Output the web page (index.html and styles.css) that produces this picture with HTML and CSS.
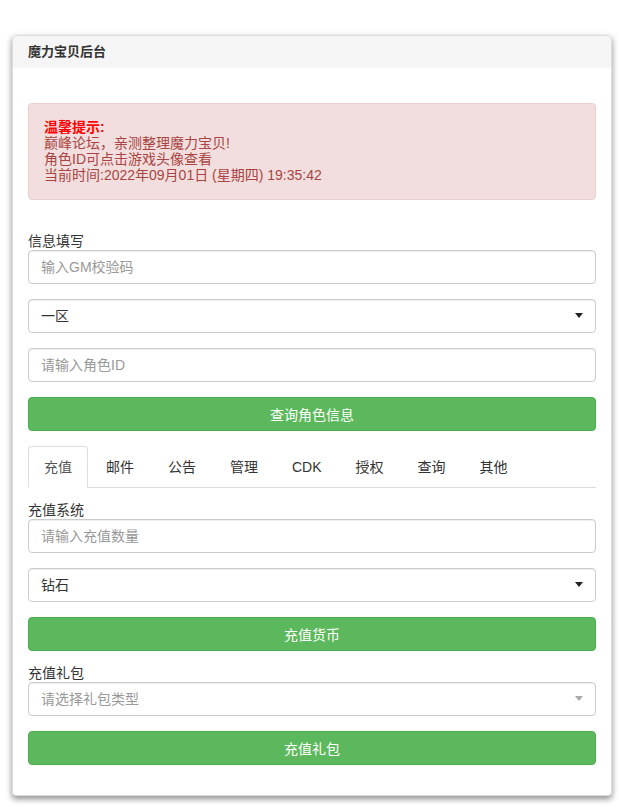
FILE: index.html
```html
<!DOCTYPE html>
<html lang="zh-CN">
<head>
    <meta charset="UTF-8">
    <meta name="viewport" content="width=device-width, initial-scale=1.0">
    <title>魔力宝贝后台</title>
    <link rel="stylesheet" href="styles.css">
</head>
<body>
    <div class="panel">
        <div class="panel-heading">魔力宝贝后台</div>
        <div class="panel-body">
            <div class="alert">
                <strong>温馨提示:</strong><br>
                巅峰论坛，亲测整理魔力宝贝!<br>
                角色ID可点击游戏头像查看<br>
                当前时间:2022年09月01日 (星期四) 19:35:42
            </div>

            <label class="field-label">信息填写</label>
            <input class="control" type="text" placeholder="输入GM校验码">
            <div class="select-wrap">
                <select class="control">
                    <option>一区</option>
                    <option>二区</option>
                </select>
            </div>
            <input class="control" type="text" placeholder="请输入角色ID">
            <button class="btn">查询角色信息</button>

            <ul class="tabs">
                <li class="active"><a href="#pay">充值</a></li>
                <li><a href="#mail">邮件</a></li>
                <li><a href="#notice">公告</a></li>
                <li><a href="#admin">管理</a></li>
                <li><a href="#cdk">CDK</a></li>
                <li><a href="#auth">授权</a></li>
                <li><a href="#query">查询</a></li>
                <li><a href="#other">其他</a></li>
            </ul>

            <div class="tab-pane">
                <label class="field-label">充值系统</label>
                <input class="control" type="text" placeholder="请输入充值数量">
                <div class="select-wrap">
                    <select class="control">
                        <option>钻石</option>
                        <option>金币</option>
                    </select>
                </div>
                <button class="btn">充值货币</button>

                <label class="field-label">充值礼包</label>
                <div class="select-wrap muted">
                    <select class="control placeholder">
                        <option>请选择礼包类型</option>
                    </select>
                </div>
                <button class="btn">充值礼包</button>
            </div>
        </div>
    </div>
</body>
</html>
```

FILE: styles.css
```css
/* bootstrap-ish panel page */
body {
    margin: 0;
    padding: 35px 8px 40px 12px;
    background: #fff;
    color: #333;
    font-family: "Liberation Sans", Arial, "Noto Sans CJK SC", sans-serif;
    font-size: 14px;
}
.panel {
    border: 1px solid #ddd;
    border-radius: 4px;
    background: #fff;
    box-shadow: 0 3px 6px rgba(0, 0, 0, 0.45);
}
.panel-heading {
    height: 32px;
    line-height: 32px;
    padding: 0 15px;
    background-color: #f5f5f5;
    font-size: 13px;
    font-weight: bold;
    border-radius: 3px 3px 0 0;
}
.panel-body {
    padding: 35px 15px 30px;
}
.alert {
    padding: 15px 15px 16px;
    line-height: 16px;
    background-color: #f2dede;
    border: 1px solid #ebccd1;
    border-radius: 4px;
    color: #a94442;
    margin-bottom: 33px;
}
.alert strong {
    color: #f00;
}
.field-label {
    display: block;
    line-height: 17px;
    color: #333;
}
.control {
    display: block;
    box-sizing: border-box;
    width: 100%;
    height: 34px;
    padding: 6px 12px;
    margin: 0 0 15px;
    font-family: inherit;
    font-size: 14px;
    color: #333;
    background: #fff;
    border: 1px solid #ccc;
    border-radius: 4px;
    box-shadow: inset 0 1px 1px rgba(0, 0, 0, 0.075);
    outline: none;
}
.control::placeholder {
    color: #999;
}
select.control {
    appearance: none;
    -webkit-appearance: none;
}
select.placeholder {
    color: #999;
}
.select-wrap {
    position: relative;
}
.select-wrap::after {
    content: "";
    position: absolute;
    right: 13px;
    top: 14px;
    border-left: 4px solid transparent;
    border-right: 4px solid transparent;
    border-top: 5px solid #222;
    pointer-events: none;
}
.select-wrap.muted::after {
    border-top-color: #aaa;
}
.btn {
    display: block;
    width: 100%;
    height: 34px;
    margin: 0;
    padding: 6px 12px;
    font-family: inherit;
    font-size: 14px;
    color: #fff;
    background-color: #5cb85c;
    border: 1px solid #4cae4c;
    border-radius: 4px;
    cursor: pointer;
}
.btn:hover {
    background-color: #449d44;
}
.tabs {
    display: flex;
    list-style: none;
    margin: 15px 0 0;
    padding: 0;
    border-bottom: 1px solid #ddd;
}
.tabs li {
    margin: 0 2px -1px 0;
}
.tabs a {
    display: block;
    padding: 10px 15px;
    line-height: 20px;
    color: #333;
    text-decoration: none;
    border: 1px solid transparent;
    border-radius: 4px 4px 0 0;
}
.tabs .active a {
    color: #555;
    background: #fff;
    border-color: #ddd #ddd transparent;
}
.tab-pane {
    padding-top: 14px;
}
.tab-pane .btn {
    margin-bottom: 14px;
}
.tab-pane .btn:last-child {
    margin-bottom: 0;
}
```
